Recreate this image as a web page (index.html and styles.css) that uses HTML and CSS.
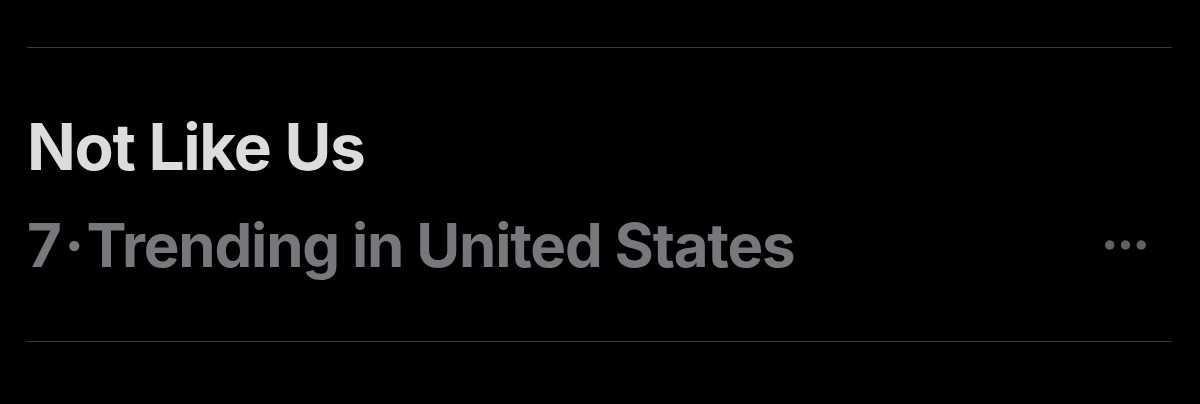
FILE: index.html
```html
<!DOCTYPE html>
<html lang="en">
<head>
<meta charset="UTF-8" />
<title>Trending</title>
<link rel="stylesheet" href="styles.css">
</head>
<body>

<div class="trend">
  <div class="trend-body">
    <div class="trend-title">Not Like Us</div>
    <div class="trend-meta">
      <span>7&#8202;·&#8202;Trending in United States</span>
      <button class="more-btn" aria-label="More">
        <svg viewBox="0 0 41 10" width="41" height="10">
          <circle cx="4.75" cy="5" r="4.7" />
          <circle cx="20.5" cy="5" r="4.7" />
          <circle cx="36.25" cy="5" r="4.7" />
        </svg>
      </button>
    </div>
  </div>
</div>

</body>
</html>
```
FILE: styles.css
```css
body {
  background: #000;
  margin: 0;
  padding: 0;
  font-family: Inter, "Liberation Sans", Arial, sans-serif;
}
.trend {
  margin: 47px 28px 0 27px;
  border-top: 1px solid #3a3c3f;
  border-bottom: 1px solid #3a3c3f;
  height: 295px;
  box-sizing: border-box;
}
.trend-body {
  padding-top: 67px;
}
.trend-title {
  color: #dcdcdc;
  font-size: 64px;
  font-weight: 700;
  letter-spacing: -1.3px;
  line-height: 1;
}
.trend-meta {
  display: flex;
  justify-content: space-between;
  align-items: center;
  margin-top: 36px;
  color: #76787c;
  font-size: 60px;
  font-weight: 700;
  letter-spacing: -1.2px;
  line-height: 1;
}
.more-btn {
  background: none;
  border: none;
  padding: 0;
  margin-right: 26px;
  fill: #5f6165;
  display: flex;
}
```
